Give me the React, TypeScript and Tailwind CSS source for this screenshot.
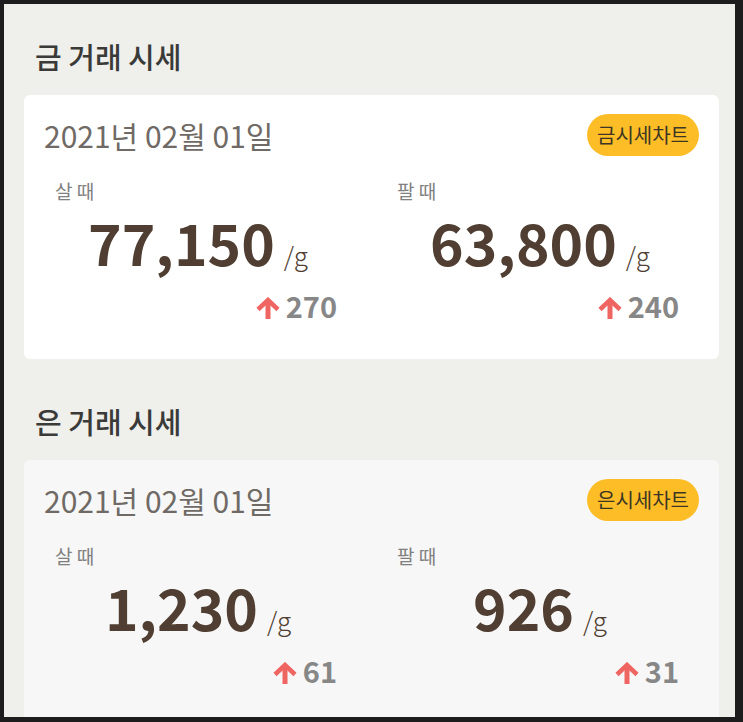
const FONT = { fontFamily: '"Noto Sans CJK KR", "Noto Sans", sans-serif' };

interface Quote {
  label: string;
  price: string;
  change: string;
}

interface Market {
  title: string;
  date: string;
  chart: string;
  cardBg: string;
  buy: Quote;
  sell: Quote;
}

const markets: Market[] = [
  {
    title: '금 거래 시세',
    date: '2021년 02월 01일',
    chart: '금시세차트',
    cardBg: 'bg-white',
    buy: { label: '살 때', price: '77,150', change: '270' },
    sell: { label: '팔 때', price: '63,800', change: '240' },
  },
  {
    title: '은 거래 시세',
    date: '2021년 02월 01일',
    chart: '은시세차트',
    cardBg: 'bg-[#f7f7f7]',
    buy: { label: '살 때', price: '1,230', change: '61' },
    sell: { label: '팔 때', price: '926', change: '31' },
  },
];

function UpArrow() {
  return (
    <svg width="24" height="22" viewBox="0 0 24 22" fill="none">
      <path d="M2 12.5 L12 3 L22 12.5" stroke="#ef6561" strokeWidth="4.5" strokeLinejoin="miter" />
      <path d="M12 4 V22" stroke="#ef6561" strokeWidth="5" />
    </svg>
  );
}

function PriceColumn({ quote }: { quote: Quote }) {
  return (
    <div className="flex flex-col">
      <div className="pl-7 mt-[21px] text-[19px] leading-[27px] text-[#808080]">{quote.label}</div>

      {/* price */}
      <div className="mt-[9px] flex items-baseline justify-center">
        <span className="text-[57px] leading-none font-bold text-[#4f3e31]">{quote.price}</span>
        <span className="ml-[9px] text-[26px] leading-none font-light text-[#4f3e31]">/g</span>
      </div>

      {/* change */}
      <div className="mt-[21px] pr-8 flex items-end justify-end gap-[6px]">
        <UpArrow />
        <span className="text-[29px] leading-[28px] font-bold text-[#878787]">{quote.change}</span>
      </div>
    </div>
  );
}

function MarketSection({ market, first }: { market: Market; first: boolean }) {
  return (
    <section className={first ? 'pt-8' : 'mt-[42px]'}>
      <h2 className="pl-[11px] text-[29px] leading-10 font-medium text-[#3a3a38]">{market.title}</h2>
      <div className={`mt-[19px] rounded-md ${market.cardBg} pb-[40px]`}>
        <div className="flex items-center justify-between pl-5 pr-5 pt-[19px]">
          <span className="text-[30px] leading-[42px] text-[#6f6a65]">{market.date}</span>
          <span className="h-[42px] px-[10px] rounded-full bg-[#fcbd26] flex items-center text-[20px] text-[#3d3624]">
            {market.chart}
          </span>
        </div>
        <div className="grid grid-cols-2 pl-[3px] pr-[8px]">
          <PriceColumn quote={market.buy} />
          <PriceColumn quote={market.sell} />
        </div>
      </div>
    </section>
  );
}

export default function App() {
  return (
    <div
      className="w-[743px] h-[722px] bg-[#1d1d1d] pt-[4px] pl-[4px] pr-[8px] pb-[5px]"
      style={FONT}
    >
      <div className="h-full bg-[#efefec] pl-5 pr-4 overflow-hidden">
        {markets.map((m, i) => (
          <MarketSection key={m.title} market={m} first={i === 0} />
        ))}
      </div>
    </div>
  );
}
